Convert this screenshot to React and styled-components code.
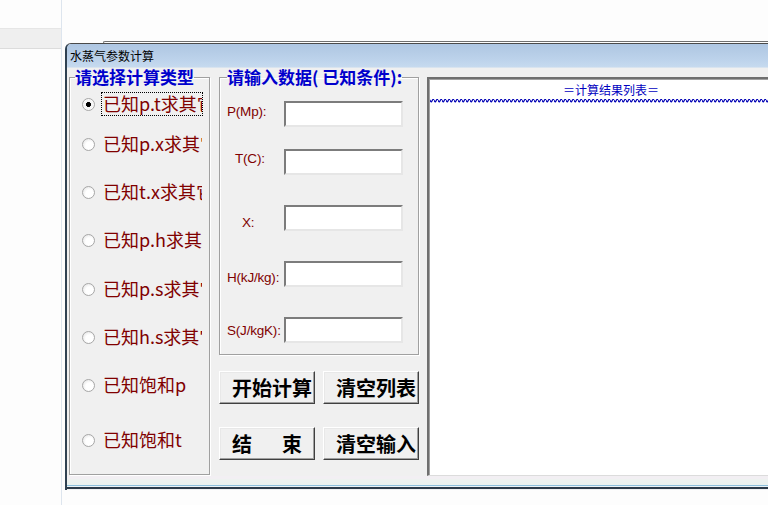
import React from "react";
import styled, { createGlobalStyle } from "styled-components";

const GlobalStyle = createGlobalStyle`
  html, body {
    margin: 0;
    padding: 0;
    background: #fdfdfd;
  }
  * {
    box-sizing: border-box;
  }
`;

const CJK = `"Noto Sans CJK SC", "Liberation Sans", sans-serif`;

const calcTypes = [
  { label: "已知p.t求其它参数", gap: 6, checked: true },
  { label: "已知p.x求其它参数", gap: 16 },
  { label: "已知t.x求其它参数", gap: 24 },
  { label: "已知p.h求其它参数", gap: 24 },
  { label: "已知p.s求其它参数", gap: 25 },
  { label: "已知h.s求其它参数", gap: 24 },
  { label: "已知饱和p", gap: 24 },
  { label: "已知饱和t", gap: 31 },
];

/* indent = label x offset, gap = space above row, dy = label shift */
const fields = [
  { label: "P(Mp):", indent: 7, gap: 15, dy: -3 },
  { label: "T(C):", indent: 15, gap: 22, dy: -4 },
  { label: "X:", indent: 22, gap: 30, dy: 4 },
  { label: "H(kJ/kg):", indent: 7, gap: 30, dy: 3 },
  { label: "S(J/kgK):", indent: 7, gap: 30, dy: 0 },
];

const buttons = ["开始计算", "清空列表", "结\u3000\u2002束", "清空输入"];

export default function App() {
  return (
    <>
      <GlobalStyle />
      <Page>
        <Sidebar>
          <SideBand />
        </Sidebar>
        <Desk>
          <GhostEdge />
          <Window>
            <TitleBar>水蒸气参数计算</TitleBar>
            <Client>
              <Group $width={141}>
                <Legend $offset={5}>请选择计算类型</Legend>
                {calcTypes.map((t) => (
                  <RadioRow key={t.label} $gap={t.gap}>
                    <RadioDot $checked={t.checked} />
                    <RadioLabel $focused={t.checked}>{t.label}</RadioLabel>
                  </RadioRow>
                ))}
              </Group>
              <MiddleColumn>
                <Group $width={200} $padBottom={11}>
                  <Legend $offset={7}>请输入数据( 已知条件):</Legend>
                  {fields.map((f) => (
                    <FieldRow key={f.label} $gap={f.gap}>
                      <FieldLabel $indent={f.indent} $dy={f.dy}>
                        {f.label}
                      </FieldLabel>
                      <TextBox />
                    </FieldRow>
                  ))}
                </Group>
                <ButtonGrid>
                  {buttons.map((b) => (
                    <ClassicButton key={b}>{b}</ClassicButton>
                  ))}
                </ButtonGrid>
              </MiddleColumn>
              <ResultList>
                <ListHeader>＝计算结果列表＝</ListHeader>
                <Wave width="100%" height="4">
                  <defs>
                    <pattern id="wave" width="4" height="4" patternUnits="userSpaceOnUse">
                      <path d="M0 0.8 Q1 4.2 2 2 Q3 -0.2 4 0.8" fill="none" stroke="#0000b4" strokeWidth="1.2" />
                    </pattern>
                  </defs>
                  <rect x="0" y="0" width="100%" height="4" fill="url(#wave)" />
                </Wave>
              </ResultList>
            </Client>
            <FrameBottom />
          </Window>
        </Desk>
      </Page>
    </>
  );
}

/* Styles */

const Page = styled.div`
  width: 768px;
  height: 505px;
  display: flex;
  overflow: hidden;
  background: #fdfdfd;
`;

const Sidebar = styled.div`
  width: 62px;
  flex-shrink: 0;
  border-right: 1px solid #dde5ee;
`;

const SideBand = styled.div`
  margin-top: 28px;
  height: 21px;
  background: #efefef;
  border-top: 1px solid #e6e6e6;
  border-bottom: 1px solid #dcdcdc;
`;

const Desk = styled.div`
  flex: 1;
  min-width: 0;
  padding: 41px 0 0 3px;
`;

const GhostEdge = styled.div`
  margin-left: 38px;
  margin-right: -20px;
  height: 2px;
  border-top: 1px solid #707070;
  border-left: 1px solid #707070;
  border-top-left-radius: 4px;
`;

const Window = styled.div`
  margin-right: -30px;
  height: 447px;
  display: flex;
  flex-direction: column;
  border-top: 1px solid #4a4a4a;
  border-left: 2px solid #2f4152;
  border-top-left-radius: 6px;
  overflow: hidden;
  background: #f0f0f0;
`;

const TitleBar = styled.div`
  height: 24px;
  line-height: 24px;
  padding-left: 3px;
  font-family: ${CJK};
  font-size: 12px;
  color: #000;
  background: linear-gradient(180deg, #aec6e2 0%, #bdd3eb 70%, #c6daef 100%);
  border-bottom: 1px solid #d9e4ef;
`;

const Client = styled.div`
  height: 408px;
  display: flex;
  align-items: flex-start;
  padding-left: 2px;
  background: #f0f0f0;
`;

const Group = styled.fieldset`
  width: ${(p) => p.$width}px;
  margin: 0;
  padding: 0 0 ${(p) => p.$padBottom || 0}px 0;
  min-width: 0;
  border: 1px solid #a0a0a0;
  box-shadow: 1px 1px 0 #ffffff, inset 1px 1px 0 #ffffff;
  ${(p) => (p.$padBottom ? "" : "height: 407px;")}
`;

const Legend = styled.legend`
  margin-left: ${(p) => p.$offset}px;
  padding: 0;
  height: 18px;
  line-height: 18px;
  font-family: ${CJK};
  font-size: 17px;
  font-weight: 700;
  color: #0000cc;
  white-space: nowrap;
`;

const RadioRow = styled.div`
  display: flex;
  align-items: center;
  height: 24px;
  margin-top: ${(p) => p.$gap}px;
  padding-left: 12px;
`;

const RadioDot = styled.span`
  width: 13px;
  height: 13px;
  flex-shrink: 0;
  border-radius: 50%;
  border: 1px solid #a7a7a7;
  background: ${(p) =>
    p.$checked
      ? "radial-gradient(circle, #000 0 2.2px, #f4f4f4 2.8px, #ffffff 100%)"
      : "radial-gradient(circle at 60% 60%, #ffffff 0 40%, #dcdcdc 100%)"};
  margin-right: 6px;
`;

const RadioLabel = styled.span`
  width: 102px;
  height: 24px;
  padding: 0 1px;
  border: 1px ${(p) => (p.$focused ? "dotted #000" : "solid transparent")};
  overflow: hidden;
  white-space: nowrap;
  font-family: ${CJK};
  font-size: 18px;
  line-height: 21px;
  color: #800000;
`;

const MiddleColumn = styled.div`
  margin-left: 9px;
  width: 200px;
  flex-shrink: 0;
  display: flex;
  flex-direction: column;
`;

const FieldRow = styled.div`
  display: flex;
  align-items: center;
  margin-top: ${(p) => p.$gap}px;
`;

const FieldLabel = styled.span`
  width: 63px;
  flex-shrink: 0;
  padding-left: ${(p) => p.$indent}px;
  margin-top: ${(p) => (p.$dy > 0 ? p.$dy * 2 : 0)}px;
  margin-bottom: ${(p) => (p.$dy < 0 ? -p.$dy * 2 : 0)}px;
  font-family: "Liberation Sans", Arial, sans-serif;
  font-size: 13.5px;
  line-height: 15px;
  color: #800000;
  white-space: nowrap;
  letter-spacing: -0.2px;
`;

const TextBox = styled.input`
  width: 119px;
  height: 26px;
  margin: 0 0 0 1px;
  padding: 0 3px;
  border: 2px solid;
  border-color: #7c7c7c #e6e6e6 #e6e6e6 #7c7c7c;
  background: #ffffff;
  outline: none;
`;

const ButtonGrid = styled.div`
  display: grid;
  grid-template-columns: 96px 96px;
  grid-auto-rows: 33px;
  column-gap: 8px;
  row-gap: 23px;
  margin-top: 16px;
`;

const ClassicButton = styled.button`
  margin: 0;
  padding: 0 0 0 12px;
  border: 1px solid;
  border-color: #ffffff #404040 #404040 #ffffff;
  box-shadow: inset -1px -1px 0 #a0a0a0, inset 1px 1px 0 #e8e8e8;
  background: #f0f0f0;
  text-align: left;
  white-space: pre;
  overflow: hidden;
  font-family: ${CJK};
  font-size: 20px;
  font-weight: 700;
  color: #000;
  line-height: 31px;
`;

const ResultList = styled.div`
  flex: 1;
  margin: 9px 0 0 8px;
  height: 399px;
  background: #ffffff;
  border-top: 2px solid #6f6f6f;
  border-left: 2px solid #6f6f6f;
  border-bottom: 1px solid #dcdcdc;
  box-shadow: inset 1px 1px 0 #a0a0a0;
`;

const ListHeader = styled.div`
  padding: 3px 0 0 134px;
  height: 20px;
  font-family: ${CJK};
  font-size: 12px;
  line-height: 16px;
  color: #0000c0;
  white-space: nowrap;
`;

const Wave = styled.svg`
  display: block;
  margin-left: 1px;
`;

const FrameBottom = styled.div`
  height: 13px;
  background: linear-gradient(
    180deg,
    #f2eff3 0,
    #f2eff3 3px,
    #eef2f0 3px,
    #eaf2ef 9px,
    #b9dcea 9px,
    #5fa2cc 10px,
    #e9f3f7 10px,
    #e9f3f7 11px,
    #2b3a48 11px,
    #2b3a48 13px
  );
`;
